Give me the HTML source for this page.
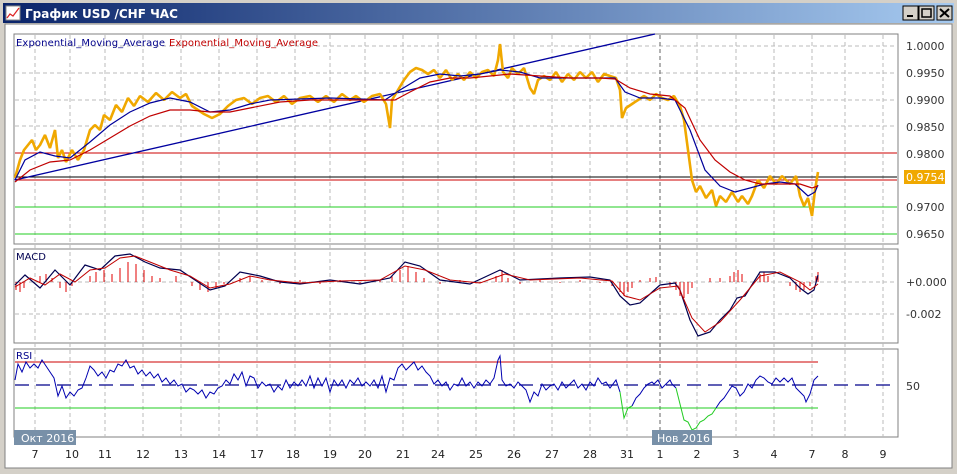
<!DOCTYPE html>
<html><head><meta charset="utf-8"><style>
html,body{margin:0;padding:0;width:957px;height:474px;overflow:hidden;background:#d4d0c8;font-family:"Liberation Sans",sans-serif}
</style></head><body>
<svg width="957" height="474" xmlns="http://www.w3.org/2000/svg" font-family="DejaVu Sans, Liberation Sans, sans-serif">
<rect x="0" y="0" width="957" height="474" fill="#d4d0c8"/>
<defs><linearGradient id="tb" x1="0" x2="1"><stop offset="0" stop-color="#0a246a"/><stop offset="1" stop-color="#a6caf0"/></linearGradient></defs>
<rect x="3" y="3" width="951" height="20" fill="url(#tb)"/>
<rect x="6" y="6" width="14" height="14" fill="#fff" stroke="#888"/>
<polyline points="7,18 10,14 13,16 19,8" fill="none" stroke="#d22" stroke-width="1.2"/>
<text x="25" y="18" font-size="12" font-weight="bold" fill="#fff">График USD /CHF  ЧАС</text>
<g stroke="#000" fill="#d4d0c8"><rect x="903" y="6" width="15" height="14"/><rect x="919" y="6" width="15" height="14"/><rect x="937" y="6" width="15" height="14"/></g>
<rect x="907" y="15" width="6" height="2" fill="#000"/>
<rect x="922" y="9" width="9" height="8" fill="none" stroke="#000" stroke-width="1.5"/>
<path d="M940,9 L949,17 M949,9 L940,17" stroke="#000" stroke-width="2"/>
<rect x="5" y="24" width="947" height="444" fill="#fff" stroke="#808080"/>
<g fill="#fff" stroke="#808080"><rect x="14" y="34" width="884" height="210"/><rect x="14" y="249" width="884" height="94"/><rect x="14" y="349" width="884" height="88"/></g>
<g stroke="#bbb" stroke-dasharray="4,3">
<path d="M35,35V437M70,35V437M105,35V437M143,35V437M181,35V437M219,35V437M257,35V437M295,35V437M330,35V437M365,35V437M403,35V437M438,35V437M476,35V437M514,35V437M552,35V437M590,35V437M627,35V437M736,35V437M774,35V437M812,35V437M845,35V437M883,35V437M697,35V437"/>
<path d="M15,46H897M15,73H897M15,100H897M15,126H897M15,180H897M15,207H897M15,282H897M15,314H897"/>
</g>
<path d="M660,35V445" stroke="#666" stroke-dasharray="4,3"/>
<line x1="15" y1="153" x2="897" y2="153" stroke="#c00"/>
<line x1="15" y1="180" x2="897" y2="180" stroke="#c00"/>
<line x1="15" y1="177" x2="897" y2="177" stroke="#000"/>
<line x1="15" y1="207" x2="897" y2="207" stroke="#2c2"/>
<line x1="15" y1="234" x2="897" y2="234" stroke="#2c2"/>
<line x1="15" y1="180" x2="655" y2="34" stroke="#0000a0" stroke-width="1.3"/>
<polyline fill="none" stroke="#f0a800" stroke-width="2.6" stroke-linejoin="bevel" points="15,178 20,160 24,150 28,145 32,140 36,150 40,145 45,135 50,148 55,130 58,158 62,150 66,162 72,150 78,160 84,150 90,130 95,125 100,130 104,115 110,120 116,105 122,112 128,98 134,106 140,96 148,102 156,93 164,100 172,92 180,98 186,94 192,106 198,110 204,114 212,118 220,114 228,106 236,100 244,98 252,104 260,98 268,96 276,102 284,96 292,104 300,98 310,96 318,102 326,96 334,102 342,94 350,100 356,96 364,102 372,96 380,94 386,104 390,128 392,100 398,90 404,80 410,72 416,68 422,70 428,74 434,70 440,78 446,70 452,80 458,74 464,80 470,72 476,78 482,72 488,70 494,76 498,60 500,44 503,72 508,78 512,68 518,74 524,68 530,88 534,94 538,80 544,76 550,80 556,72 562,82 568,74 574,80 580,72 586,78 592,72 598,82 604,74 610,76 616,78 620,90 622,118 626,108 632,104 638,100 644,96 650,100 656,94 662,98 668,100 674,96 680,106 684,120 688,150 692,180 696,192 700,186 706,198 712,190 716,206 720,196 726,202 732,192 738,202 742,196 748,204 752,196 758,180 764,188 770,176 776,184 782,176 790,184 796,176 800,196 804,206 808,198 812,216 815,190 818,172"/>
<polyline fill="none" stroke="#00009a" stroke-width="1.2" points="15,180 25,160 40,152 55,156 70,158 90,142 110,125 130,112 150,103 170,98 190,102 210,112 230,110 250,104 270,100 300,99 330,98 360,99 385,100 400,90 420,78 440,74 460,76 480,74 500,70 520,72 540,78 560,78 590,78 615,78 625,92 640,98 660,98 675,100 690,130 705,170 720,186 735,192 750,188 765,184 780,182 795,184 808,196 815,192 818,185"/>
<polyline fill="none" stroke="#c00000" stroke-width="1.2" points="15,182 30,170 50,162 70,160 90,150 110,138 130,126 150,116 170,110 190,110 210,112 230,112 250,108 280,102 310,100 340,100 370,100 395,100 410,92 430,82 450,78 470,78 490,76 510,74 540,76 570,78 600,78 615,79 630,88 650,94 670,96 685,108 700,140 715,160 730,172 745,180 760,184 780,184 800,184 812,188 818,186"/>
<path stroke="#e00000" stroke-width="1" fill="none" d="M16,282V290M20,282V292M24,282V288M40,282V276M46,282V274M52,282V278M60,282V288M66,282V292M72,282V286M90,282V276M96,282V272M104,282V270M112,282V274M120,282V268M128,282V262M136,282V264M144,282V270M152,282V276M160,282V278M176,282V276M192,282V286M200,282V290M208,282V292M216,282V288M224,282V284M240,282V278M250,282V276M262,282V280M280,282V284M300,282V280M320,282V284M340,282V280M360,282V284M380,282V280M392,282V276M400,282V270M408,282V266M416,282V272M424,282V278M440,282V284M460,282V280M480,282V283M496,282V276M502,282V270M508,282V278M520,282V284M540,282V280M560,282V283M580,282V280M600,282V283M612,282V286M620,282V292M624,282V296M628,282V292M632,282V288M640,282V280M650,282V278M656,282V277M670,282V286M676,282V290M680,282V296M684,282V298M688,282V294M692,282V288M710,282V278M720,282V278M730,282V276M734,282V272M738,282V270M742,282V274M760,282V274M764,282V272M768,282V276M790,282V286M796,282V290M800,282V292M804,282V290M810,282V286M816,282V276M818,282V272"/>
<polyline fill="none" stroke="#000050" stroke-width="1.2" points="15,285 25,275 40,288 55,270 70,285 85,265 100,270 115,256 130,254 145,262 160,268 180,270 195,280 210,290 225,286 240,272 260,276 280,282 300,284 330,280 360,284 390,278 405,262 420,266 440,280 470,284 500,270 520,280 560,278 590,277 610,280 620,296 630,305 640,303 650,294 660,285 675,283 680,290 690,320 698,336 710,332 720,320 730,310 737,298 745,296 760,272 775,272 790,278 800,288 808,294 814,290 818,275"/>
<polyline fill="none" stroke="#c00000" stroke-width="1" points="15,287 30,278 45,285 60,274 75,282 90,270 105,268 120,258 135,256 150,262 170,270 190,276 210,288 230,284 250,276 270,280 300,283 340,281 380,280 405,266 425,270 450,280 480,283 505,274 530,280 580,278 612,281 625,296 640,300 660,288 678,286 692,318 705,332 720,322 740,300 760,276 780,272 800,282 810,290 818,284"/>
<line x1="15" y1="362" x2="818" y2="362" stroke="#c00"/>
<line x1="15" y1="408" x2="818" y2="408" stroke="#2c2"/>
<line x1="15" y1="385" x2="897" y2="385" stroke="#00008a" stroke-width="1.2" stroke-dasharray="14,7"/>
<polyline fill="none" stroke="#0000b0" stroke-width="1" points="15,380 18,364 22,372 26,362 30,368 34,364 38,368 42,360 46,366 50,372 54,378 58,396 62,386 66,398 70,392 74,396 78,390 82,388 86,378 90,366 94,370 98,376 102,372 106,378 110,370 114,372 118,364 122,366 126,360 130,368 134,366 138,374 142,370 146,376 150,372 154,378 158,374 162,382 166,378 170,384 174,380 178,386 182,384 186,392 190,388 194,390 198,394 202,390 206,398 210,392 214,394 218,388 222,386 226,380 230,384 234,374 238,380 242,372 246,386 250,376 254,378 258,388 262,382 266,386 270,384 274,392 278,386 282,390 286,380 290,388 294,382 298,386 302,380 306,386 310,376 314,388 318,378 322,386 326,378 330,392 334,380 338,386 342,380 346,388 350,380 354,384 358,378 362,386 366,382 370,386 374,380 378,388 382,376 386,392 390,378 394,380 398,368 402,364 406,370 410,366 414,362 418,370 422,366 426,372 430,376 434,384 438,380 442,386 446,382 450,390 454,384 458,386 462,378 466,386 470,382 474,388 478,382 482,386 486,380 490,384 494,378 498,360 500,356 502,380 506,386 510,384 514,388 518,382 522,386 526,390 530,402 534,392 538,396 542,384 546,390 550,386 554,384 558,390 562,382 566,388 570,384 574,380 578,388 582,384 586,390 590,382 594,386 598,378 602,384 606,382 610,388 616,380 620,392"/>
<polyline fill="none" stroke="#22cc22" stroke-width="1" points="620,392 624,418 628,408 632,406"/>
<polyline fill="none" stroke="#0000b0" stroke-width="1" points="632,406 636,398 640,394 644,388 648,384 652,382 654,384 658,380 662,388 666,384 670,380 672,384 676,388"/>
<polyline fill="none" stroke="#22cc22" stroke-width="1" points="676,388 680,404 684,420 688,422 692,430 696,428 700,422 704,420 708,416 712,414 716,408"/>
<polyline fill="none" stroke="#0000b0" stroke-width="1" points="716,408 720,402 724,398 728,392 732,386 736,388 740,396 744,392 748,384 752,388 756,380 760,376 764,378 768,382 772,384 776,378 780,382 784,378 788,382 792,378 796,388 800,392 804,396 806,402 810,394 814,380 818,376"/>
<text x="16" y="46" font-size="10" fill="#00008a" textLength="149">Exponential_Moving_Average</text>
<text x="169" y="46" font-size="10" fill="#c00000" textLength="149">Exponential_Moving_Average</text>
<text x="16" y="260" font-size="10" fill="#000050">MACD</text>
<text x="16" y="359" font-size="10" fill="#00008a">RSI</text>
<g font-size="11" fill="#333">
<text x="906" y="50">1.0000</text><text x="906" y="77">0.9950</text><text x="906" y="104">0.9900</text><text x="906" y="131">0.9850</text><text x="906" y="158">0.9800</text><text x="906" y="211">0.9700</text><text x="906" y="238">0.9650</text>
<text x="906" y="286">+0.000</text><text x="906" y="318">-0.002</text><text x="906" y="390">50</text>
</g>
<rect x="904" y="170" width="41" height="14" fill="#f0a800"/>
<text x="906" y="181" font-size="11" fill="#fff">0.9754</text>
<rect x="14" y="430" width="62" height="15" fill="#7890a8"/>
<text x="21" y="442" font-size="11" fill="#fff">Окт 2016</text>
<rect x="652" y="430" width="60" height="15" fill="#7890a8"/>
<text x="657" y="442" font-size="11" fill="#fff">Нов 2016</text>
<g font-size="11" fill="#222" text-anchor="middle">
<text x="35" y="458">7</text><text x="72" y="458">10</text><text x="105" y="458">11</text><text x="143" y="458">12</text><text x="181" y="458">13</text><text x="219" y="458">14</text><text x="257" y="458">17</text><text x="293" y="458">18</text><text x="330" y="458">19</text><text x="365" y="458">20</text><text x="403" y="458">21</text><text x="438" y="458">24</text><text x="476" y="458">25</text><text x="514" y="458">26</text><text x="552" y="458">27</text><text x="590" y="458">28</text><text x="627" y="458">31</text><text x="660" y="458">1</text><text x="697" y="458">2</text><text x="736" y="458">3</text><text x="774" y="458">4</text><text x="812" y="458">7</text><text x="845" y="458">8</text><text x="883" y="458">9</text>
</g>
</svg>
</body></html>
